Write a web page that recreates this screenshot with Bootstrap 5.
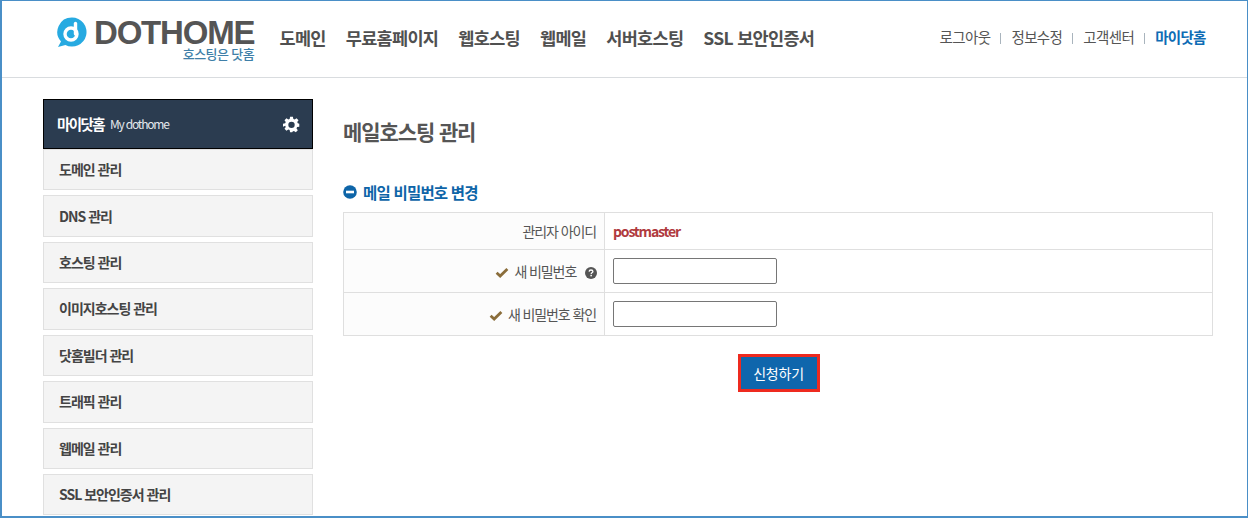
<!DOCTYPE html>
<html lang="ko">
<head>
<meta charset="utf-8">
<title>메일호스팅 관리</title>
<link href="https://cdn.jsdelivr.net/npm/bootstrap@5.3.0/dist/css/bootstrap.min.css" rel="stylesheet">
<style>
html,body{height:518px;overflow:hidden;background:#fff}
body{font-family:"Noto Sans CJK KR","Noto Sans",sans-serif;color:#555;font-size:14px}
.frame{height:518px;border:1px solid #4a8fc7;border-width:1px 1px 2px 2px;overflow:hidden;display:flex;flex-direction:column}
.topbar{height:77px;flex:none;border-bottom:1px solid #d9dcdf;padding-left:55px;padding-right:41.500px}
.logo-wrap{width:197px;margin-top:18px;flex:none}
.logo-mark{margin-top:-2px}
.logo-word{font-family:"Liberation Sans",sans-serif;font-weight:700;font-size:33px;line-height:28px;letter-spacing:-1.2px;color:#555;margin-left:37px;white-space:nowrap}
.logo-sub{font-size:13px;line-height:13px;color:#3f7fa8;text-align:right;letter-spacing:-.6px;font-weight:500}
.mainnav{gap:20px;margin-left:25.500px;margin-top:24px;font-size:17.500px;font-weight:700;letter-spacing:-.68px;line-height:26px}
.mainnav a{color:#505050;text-decoration:none;white-space:nowrap}
.utilnav{margin-top:26px;font-size:14.500px;line-height:20px;letter-spacing:-.6px;align-items:center}
.utilnav a{color:#555;text-decoration:none}
.utilnav a.now{color:#0e6cb5;font-weight:700;letter-spacing:-.8px}
.utilnav i{display:block;width:1px;height:11px;background:#a9b4bd;margin:2px 10px 0 10px}
.bodyarea{padding:21px 33px 0 41px;gap:30px;flex:1;min-height:0}
.sidecol{width:270px;flex:none}
.sidehead{height:50px;background:#2b3c50;border:1px solid #000;padding:0 12px 0 13px;color:#fff}
.sidehead b{font-size:14.500px;letter-spacing:-1.6px;font-weight:700}
.sidehead span{font-size:12px;letter-spacing:-1.2px;margin-left:6px;color:#e4e8ec}
.sideitem{height:41.430px;flex:none;background:#f4f4f4;border:1px solid #e0e0e0;padding-left:15px;margin-bottom:5px;font-size:14px;font-weight:700;letter-spacing:-1px;color:#444;text-decoration:none;display:flex;align-items:center}
.sidelist{display:flex;flex-direction:column}
.contentcol{width:870px;flex:none}
.pagetitle{font-size:21px;font-weight:700;color:#555;letter-spacing:-1.1px;line-height:30px;margin:17px 0 0}
.sectitle{font-size:15.500px;font-weight:700;color:#0e65a8;letter-spacing:-.8px;line-height:22px;margin:35px 0 9px;gap:6px}
.formtable{width:870px;table-layout:fixed;margin:0;--bs-table-border-color:#dfdfdf}
.formtable th,.formtable td{padding:0 8px;vertical-align:middle;font-size:14px;letter-spacing:-1.1px;line-height:20px}
.formtable th{width:261px;background:#fcfcfc;text-align:right;font-weight:400;color:#555}
.formtable th.qrow{padding-right:7px}
.formtable tr.r1{height:37px}
.formtable tr.r2{height:43px}
.formtable .uid{color:#b03a3e;font-weight:700;letter-spacing:-1.15px}
.pwbox{width:164px;height:26px;border:1px solid #767676;border-radius:2px;background:#fff;display:block;padding:0 4px}
.chk{margin-right:5px;vertical-align:-1px}
.qmark{margin-left:6px;vertical-align:-2px}
.btnrow{padding-left:1px}
.submitbtn{width:82px;height:38px;margin-top:18px;background:#0f66ac;border:3px solid #ee2a1f;border-radius:0;color:#fff;font-size:14px;letter-spacing:-.2px;padding:0}
.submitbtn:hover{background:#0f66ac;color:#fff;border-color:#ee2a1f}
</style>
</head>
<body>
<div class="frame">
  <header class="topbar d-flex align-items-start">
    <div class="logo-wrap position-relative">
      <svg class="logo-mark position-absolute top-0 start-0" width="30" height="31" viewBox="0 0 30 31" aria-hidden="true">
        <path d="M15 .5a14.500 14.500 0 1 1-6.600 27.400L1 30l3-5.400A14.500 14.500 0 0 1 15 .5z" fill="#27aae1"/>
        <circle cx="14" cy="17" r="6" fill="none" stroke="#fff" stroke-width="3.400"/>
        <path d="M18.500 17V6.500" stroke="#fff" stroke-width="3.400" stroke-linecap="round"/>
      </svg>
      <div class="logo-word">DOTHOME</div>
      <div class="logo-sub">호스팅은 닷홈</div>
    </div>
    <nav class="mainnav d-flex">
      <a href="#">도메인</a><a href="#">무료홈페이지</a><a href="#">웹호스팅</a><a href="#">웹메일</a><a href="#">서버호스팅</a><a href="#">SSL 보안인증서</a>
    </nav>
    <nav class="utilnav d-flex ms-auto">
      <a href="#">로그아웃</a><i></i><a href="#">정보수정</a><i></i><a href="#">고객센터</a><i></i><a href="#" class="now">마이닷홈</a>
    </nav>
  </header>
  <div class="bodyarea d-flex align-items-start">
    <aside class="sidecol">
      <div class="sidehead d-flex align-items-center">
        <b>마이닷홈</b><span>My dothome</span>
        <svg class="ms-auto" width="17" height="17" viewBox="0 0 24 24" aria-hidden="true"><path fill="#fff" fill-rule="evenodd" d="M10 1h4l.6 3.100 1.900.8 2.600-1.800 2.800 2.800-1.800 2.600.8 1.900L23 11v4l-3.100.6-.8 1.900 1.800 2.600-2.800 2.800-2.600-1.800-1.900.8L13 23h-3l-.6-3.100-1.900-.8-2.600 1.800-2.800-2.800 1.800-2.600-.8-1.900L0 15v-4l3.100-.6.8-1.900L2.100 5.900l2.800-2.800 2.600 1.800 1.900-.8zM12 8a4.500 4.500 0 1 0 0 9 4.500 4.500 0 0 0 0-9z"/></svg>
      </div>
      <div class="sidelist">
        <a class="sideitem" href="#">도메인 관리</a>
        <a class="sideitem" href="#">DNS 관리</a>
        <a class="sideitem" href="#">호스팅 관리</a>
        <a class="sideitem" href="#">이미지호스팅 관리</a>
        <a class="sideitem" href="#">닷홈빌더 관리</a>
        <a class="sideitem" href="#">트래픽 관리</a>
        <a class="sideitem" href="#">웹메일 관리</a>
        <a class="sideitem" href="#">SSL 보안인증서 관리</a>
      </div>
    </aside>
    <main class="contentcol">
      <h1 class="pagetitle">메일호스팅 관리</h1>
      <h2 class="sectitle d-flex align-items-center">
        <svg width="14" height="14" viewBox="0 0 14 14" aria-hidden="true"><circle cx="7" cy="7" r="6.800" fill="#0e65a8"/><rect x="3" y="5.700" width="8" height="2.600" fill="#fff"/></svg>
        메일 비밀번호 변경
      </h2>
      <table class="table table-bordered formtable">
        <tbody>
          <tr class="r1"><th>관리자 아이디</th><td class="uid">postmaster</td></tr>
          <tr class="r2"><th class="qrow">
            <svg class="chk" width="14" height="11" viewBox="0 0 13 10" aria-hidden="true"><path d="M1.500 5.200 4.800 8.300 11.500 1.700" fill="none" stroke="#8a6d3b" stroke-width="2.600"/></svg>새 비밀번호
            <svg class="qmark" width="12" height="12" viewBox="0 0 12 12" aria-hidden="true"><circle cx="6" cy="6" r="6" fill="#555"/><path d="M4.100 4.600C4.200 3.500 5 3 6 3c1.100 0 1.900.6 1.900 1.500 0 1.300-1.700 1.300-1.700 2.400" fill="none" stroke="#fff" stroke-width="1.300"/><rect x="5.400" y="7.800" width="1.500" height="1.500" fill="#fff"/></svg>
          </th><td><input class="pwbox" type="password" aria-label="새 비밀번호"></td></tr>
          <tr class="r2"><th>
            <svg class="chk" width="14" height="11" viewBox="0 0 13 10" aria-hidden="true"><path d="M1.500 5.200 4.800 8.300 11.500 1.700" fill="none" stroke="#8a6d3b" stroke-width="2.600"/></svg>새 비밀번호 확인
          </th><td><input class="pwbox" type="password" aria-label="새 비밀번호 확인"></td></tr>
        </tbody>
      </table>
      <div class="text-center btnrow"><button type="button" class="btn submitbtn">신청하기</button></div>
    </main>
  </div>
</div>
<script src="https://cdn.jsdelivr.net/npm/bootstrap@5.3.0/dist/js/bootstrap.bundle.min.js"></script>
</body>
</html>
